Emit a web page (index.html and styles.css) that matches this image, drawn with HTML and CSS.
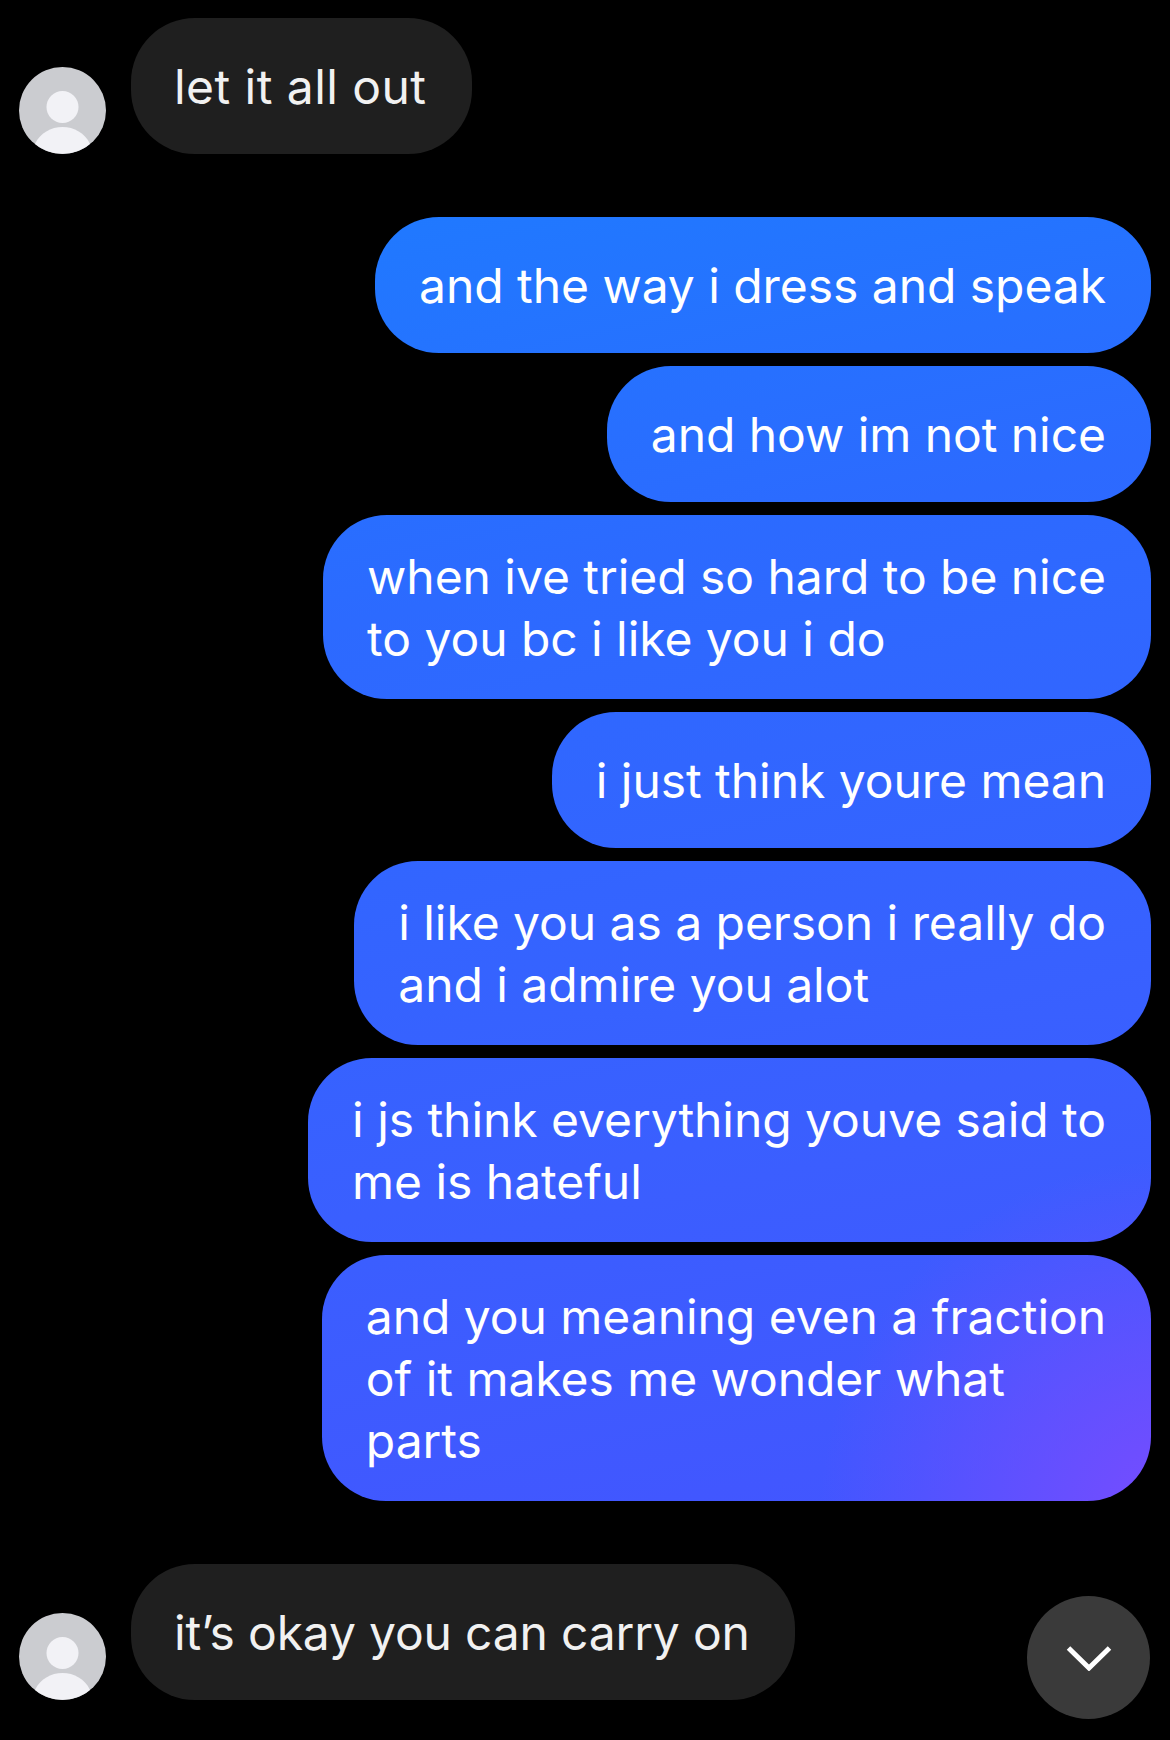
FILE: index.html
```html
<!DOCTYPE html>
<html lang="en">
<head>
    <meta charset="UTF-8">
    <meta name="viewport" content="width=device-width, initial-scale=1.0">
    <title>Messages</title>
    <link rel="stylesheet" href="styles.css">
</head>
<body>
    <div class="thread">
        <div class="row incoming">
            <svg class="avatar" viewBox="0 0 87 87">
                <circle cx="43.5" cy="43.5" r="43.5" fill="#cbccd0"/>
                <circle cx="43.5" cy="40" r="16" fill="#f2f2f6"/>
                <path d="M16 77 C21 66 32 60 43.5 60 C55 60 66 66 71 77 A43.5 43.5 0 0 1 16 77 Z" fill="#f2f2f6"/>
            </svg>
            <div class="bubble single theirs roomy">let it all out</div>
        </div>

        <div class="group">
            <div class="bubble single mine">and the way i dress and speak</div>
            <div class="bubble single mine">and how im not nice</div>
            <div class="bubble mine">when ive tried so hard to be nice<br>to you bc i like you i do</div>
            <div class="bubble single mine">i just think youre mean</div>
            <div class="bubble mine">i like you as a person i really do<br>and i admire you alot</div>
            <div class="bubble mine">i js think everything youve said to<br>me is hateful</div>
            <div class="bubble mine">and you meaning even a fraction<br>of it makes me wonder what<br>parts</div>
        </div>

        <div class="row incoming">
            <svg class="avatar" viewBox="0 0 87 87">
                <circle cx="43.5" cy="43.5" r="43.5" fill="#cbccd0"/>
                <circle cx="43.5" cy="40" r="16" fill="#f2f2f6"/>
                <path d="M16 77 C21 66 32 60 43.5 60 C55 60 66 66 71 77 A43.5 43.5 0 0 1 16 77 Z" fill="#f2f2f6"/>
            </svg>
            <div class="bubble single theirs">it’s okay you can carry on</div>
        </div>
    </div>

    <button class="scroll-down" type="button" aria-label="Scroll to latest">
        <svg viewBox="0 0 46 26" width="46" height="26">
            <path d="M2.5 3 L23 23 L43.5 3" fill="none" stroke="#fff" stroke-width="5"/>
        </svg>
    </button>
</body>
</html>
```

FILE: styles.css
```css
html, body {
    margin: 0;
    padding: 0;
    background-color: #000;
}
body {
    position: relative;
    width: 1170px;
    height: 1740px;
    overflow: hidden;
    font-family: Inter, "Liberation Sans", sans-serif;
}
.thread {
    display: flex;
    flex-direction: column;
    gap: 63px;
    padding: 18px 19px 0 19px;
}
.row {
    display: flex;
    align-items: flex-end;
    gap: 25px;
}
.group {
    display: flex;
    flex-direction: column;
    align-items: flex-end;
    gap: 13px;
}
.avatar {
    width: 87px;
    height: 87px;
    flex-shrink: 0;
}
.bubble {
    padding: 31px 45px 29px 44px;
    border-radius: 64px;
    font-size: 48px;
    letter-spacing: -0.05px;
    line-height: 62px;
    white-space: nowrap;
}
.bubble.single {
    padding-top: 38px;
    padding-bottom: 36px;
}
.theirs {
    background-color: #1f1f1f;
    color: #f1f1f1;
    padding-left: 43px;
    letter-spacing: -0.18px;
}
.roomy {
    letter-spacing: 0.45px;
}
.mine {
    color: #fff;
    background-color: #2f68ff;
    background-image:
        radial-gradient(circle 350px at 1170px 1510px, rgba(125, 75, 255, 0.9), rgba(125, 75, 255, 0) 100%),
        linear-gradient(168deg, #1e7bff 12%, #2c6aff 35%, #3a5fff 65%, #4256ff 85%);
    background-attachment: fixed;
}
.scroll-down {
    position: absolute;
    left: 1027px;
    top: 1596px;
    width: 123px;
    height: 123px;
    padding: 0;
    border: none;
    border-radius: 50%;
    background-color: #3a3a3a;
    display: flex;
    align-items: center;
    justify-content: center;
}
```
